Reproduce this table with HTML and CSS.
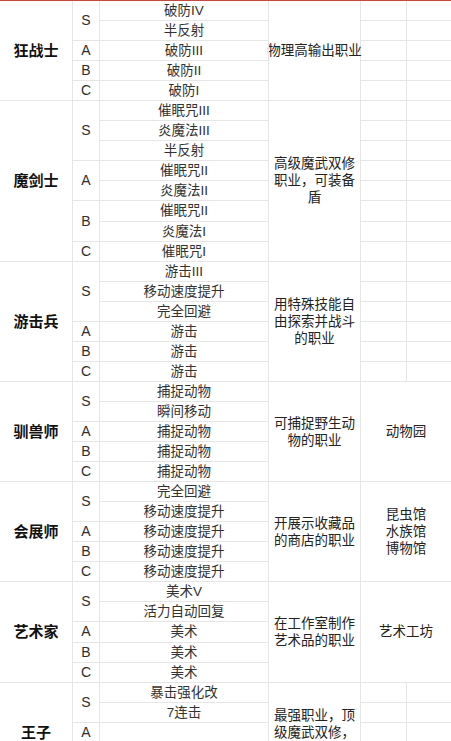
FILE: index.html
```html
<!DOCTYPE html>
<html lang="zh-CN">
<head>
<meta charset="utf-8">
<title>职业一览</title>
<link rel="stylesheet" href="styles.css">
</head>
<body>
<div class="sheet">
  <!-- 狂战士 -->
  <div class="cell name s5">狂战士</div>
  <div class="cell rank s2">S</div>
  <div class="cell skill">破防IV</div>
  <div class="cell desc s5"><span class="nowrap">物理高输出职业</span></div>
  <div class="cell b5"></div><div class="cell b6"></div>
  <div class="cell skill">半反射</div>
  <div class="cell b5"></div><div class="cell b6"></div>
  <div class="cell rank">A</div>
  <div class="cell skill">破防III</div>
  <div class="cell b5"></div><div class="cell b6"></div>
  <div class="cell rank">B</div>
  <div class="cell skill">破防II</div>
  <div class="cell b5"></div><div class="cell b6"></div>
  <div class="cell rank">C</div>
  <div class="cell skill">破防I</div>
  <div class="cell b5"></div><div class="cell b6"></div>

  <!-- 魔剑士 -->
  <div class="cell name s8">魔剑士</div>
  <div class="cell rank s3">S</div>
  <div class="cell skill">催眠咒III</div>
  <div class="cell desc s8">高级魔武双修职业，可装备盾</div>
  <div class="cell b5"></div><div class="cell b6"></div>
  <div class="cell skill">炎魔法III</div>
  <div class="cell b5"></div><div class="cell b6"></div>
  <div class="cell skill">半反射</div>
  <div class="cell b5"></div><div class="cell b6"></div>
  <div class="cell rank s2">A</div>
  <div class="cell skill">催眠咒II</div>
  <div class="cell b5"></div><div class="cell b6"></div>
  <div class="cell skill">炎魔法II</div>
  <div class="cell b5"></div><div class="cell b6"></div>
  <div class="cell rank s2">B</div>
  <div class="cell skill">催眠咒II</div>
  <div class="cell b5"></div><div class="cell b6"></div>
  <div class="cell skill">炎魔法I</div>
  <div class="cell b5"></div><div class="cell b6"></div>
  <div class="cell rank">C</div>
  <div class="cell skill">催眠咒I</div>
  <div class="cell b5"></div><div class="cell b6"></div>

  <!-- 游击兵 -->
  <div class="cell name s6">游击兵</div>
  <div class="cell rank s3">S</div>
  <div class="cell skill">游击III</div>
  <div class="cell desc s6">用特殊技能自由探索并战斗的职业</div>
  <div class="cell b5"></div><div class="cell b6"></div>
  <div class="cell skill">移动速度提升</div>
  <div class="cell b5"></div><div class="cell b6"></div>
  <div class="cell skill">完全回避</div>
  <div class="cell b5"></div><div class="cell b6"></div>
  <div class="cell rank">A</div>
  <div class="cell skill">游击</div>
  <div class="cell b5"></div><div class="cell b6"></div>
  <div class="cell rank">B</div>
  <div class="cell skill">游击</div>
  <div class="cell b5"></div><div class="cell b6"></div>
  <div class="cell rank">C</div>
  <div class="cell skill">游击</div>
  <div class="cell b5"></div><div class="cell b6"></div>

  <!-- 驯兽师 -->
  <div class="cell name s5">驯兽师</div>
  <div class="cell rank s2">S</div>
  <div class="cell skill">捕捉动物</div>
  <div class="cell desc s5">可捕捉野生动物的职业</div>
  <div class="cell bm s5">动物园</div>
  <div class="cell skill">瞬间移动</div>
  <div class="cell rank">A</div>
  <div class="cell skill">捕捉动物</div>
  <div class="cell rank">B</div>
  <div class="cell skill">捕捉动物</div>
  <div class="cell rank">C</div>
  <div class="cell skill">捕捉动物</div>

  <!-- 会展师 -->
  <div class="cell name s5">会展师</div>
  <div class="cell rank s2">S</div>
  <div class="cell skill">完全回避</div>
  <div class="cell desc s5">开展示收藏品的商店的职业</div>
  <div class="cell bm s5">昆虫馆<br>水族馆<br>博物馆</div>
  <div class="cell skill">移动速度提升</div>
  <div class="cell rank">A</div>
  <div class="cell skill">移动速度提升</div>
  <div class="cell rank">B</div>
  <div class="cell skill">移动速度提升</div>
  <div class="cell rank">C</div>
  <div class="cell skill">移动速度提升</div>

  <!-- 艺术家 -->
  <div class="cell name s5">艺术家</div>
  <div class="cell rank s2">S</div>
  <div class="cell skill">美术V</div>
  <div class="cell desc s5">在工作室制作艺术品的职业</div>
  <div class="cell bm s5">艺术工坊</div>
  <div class="cell skill">活力自动回复</div>
  <div class="cell rank">A</div>
  <div class="cell skill">美术</div>
  <div class="cell rank">B</div>
  <div class="cell skill">美术</div>
  <div class="cell rank">C</div>
  <div class="cell skill">美术</div>

  <!-- 王子 -->
  <div class="cell name s5">王子</div>
  <div class="cell rank s2">S</div>
  <div class="cell skill">暴击强化改</div>
  <div class="cell desc s5">最强职业，顶级魔武双修，可装备盾</div>
  <div class="cell b5"></div><div class="cell b6"></div>
  <div class="cell skill">7连击</div>
  <div class="cell b5"></div><div class="cell b6"></div>
  <div class="cell rank">A</div>
  <div class="cell skill"></div>
  <div class="cell b5"></div><div class="cell b6"></div>
  <div class="cell rank">B</div>
  <div class="cell skill"></div>
  <div class="cell b5"></div><div class="cell b6"></div>
  <div class="cell rank">C</div>
  <div class="cell skill"></div>
  <div class="cell b5"></div><div class="cell b6"></div>
</div>
</body>
</html>
```

FILE: styles.css
```css
html, body {
  margin: 0;
  padding: 0;
  background: #ffffff;
  overflow: hidden;
}

body {
  font-family: "Liberation Sans", "Noto Sans CJK SC", sans-serif;
  color: #333333;
}

.sheet {
  display: grid;
  grid-template-columns: 73px 27px 169px 92px 46px 44px;
  grid-auto-rows: 20.05px;
  border-top: 1px solid #c4493f;
  width: 451px;
}

.cell {
  box-sizing: border-box;
  border-right: 1px solid #e6e6e6;
  border-bottom: 1px solid #e6e6e6;
  display: flex;
  align-items: center;
  justify-content: center;
  text-align: center;
  min-width: 0;
  font-size: 13.5px;
  line-height: 17px;
}

.s2 { grid-row: span 2; }
.s3 { grid-row: span 3; }
.s5 { grid-row: span 5; }
.s6 { grid-row: span 6; }
.s8 { grid-row: span 8; }

.name {
  grid-column: 1;
  font-size: 15px;
  font-weight: 700;
  color: #111111;
}

.rank {
  grid-column: 2;
  font-size: 14px;
  color: #2e2e2e;
}

.skill {
  grid-column: 3;
  color: #333333;
}

.desc {
  grid-column: 4;
  color: #222222;
}

.nowrap {
  white-space: nowrap;
}

.b5 {
  grid-column: 5;
}

.b6 {
  grid-column: 6;
  border-right: none;
}

.bm {
  grid-column: 5 / span 2;
  border-right: none;
  color: #222222;
}
```
